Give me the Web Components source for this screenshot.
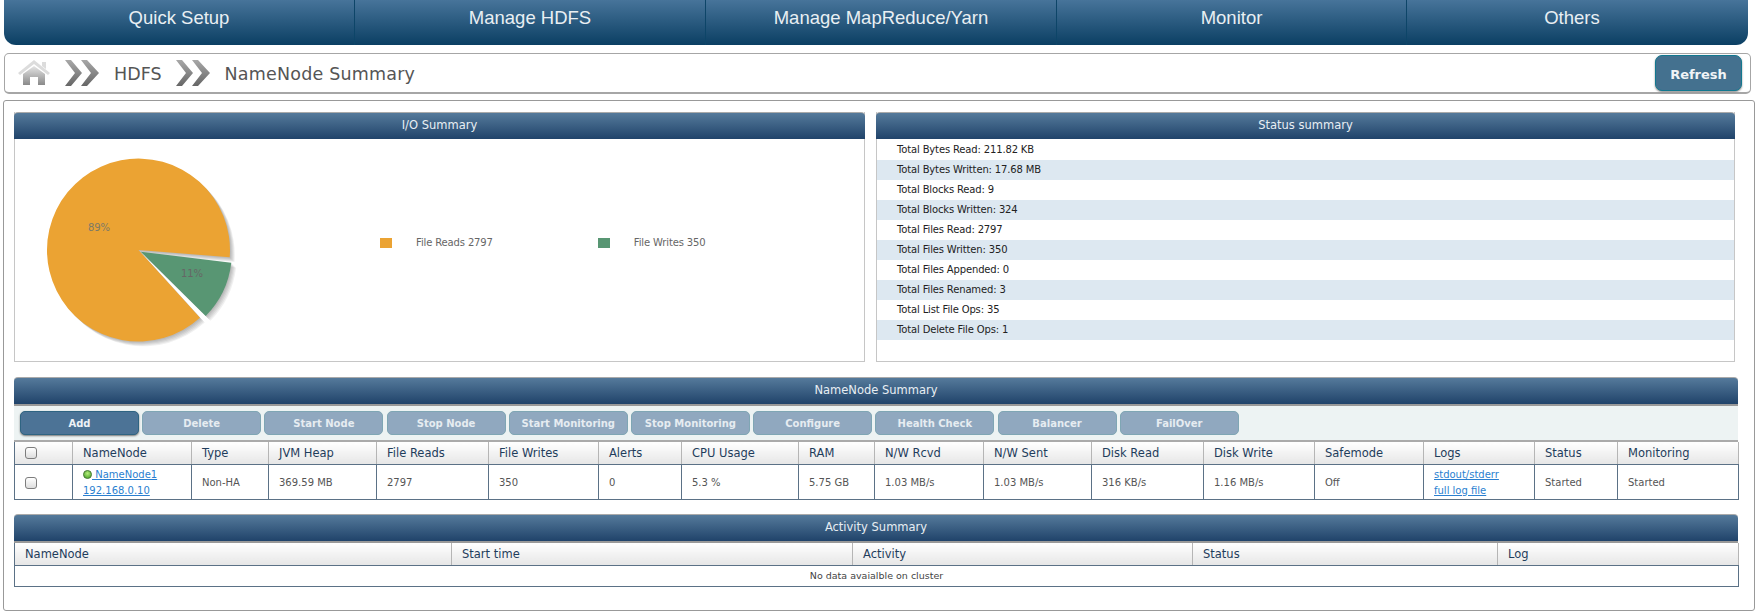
<!DOCTYPE html>
<html>
<head>
<meta charset="utf-8">
<title>NameNode Summary</title>
<style>
    html, body { margin: 0; padding: 0; background: #fff; }
    body { font-family: "DejaVu Sans", sans-serif; width: 1760px; height: 616px; overflow: hidden; }
</style>
</head>
<body>
<top-nav>
    <span>Quick Setup</span>
    <span>Manage HDFS</span>
    <span>Manage MapReduce/Yarn</span>
    <span>Monitor</span>
    <span>Others</span>
</top-nav>
<bread-crumb></bread-crumb>
<main-panel>
    <div style="display:flex;gap:11px">
        <box-panel titulo="I/O Summary" style="width:851px;height:250px"><io-pie></io-pie></box-panel>
        <box-panel titulo="Status summary" style="width:859px;height:250px"><status-list></status-list></box-panel>
    </div>
    <box-panel titulo="NameNode Summary" plain style="margin-top:15px;height:123px">
        <tool-bar></tool-bar>
        <summary-table></summary-table>
    </box-panel>
    <box-panel titulo="Activity Summary" plain style="margin-top:14px">
        <activity-table></activity-table>
    </box-panel>
</main-panel>

<script>
class topNav extends HTMLElement{
    constructor(){
        super();
        this.attachShadow({mode: 'open'});
        this.shadowRoot.innerHTML = `
            <style>
                :host {
                    display: grid;
                    grid-template-columns: 351px 351px 351px 350px 1fr;
                    margin-left: 4px;
                    width: 1744px;
                    height: 45px;
                    border-radius: 0 0 12px 12px;
                    overflow: hidden;
                    background: linear-gradient(#47749a, #0b3f63);
                    font-family: "Liberation Sans", Arial, sans-serif;
                    font-size: 18.5px;
                    color: #e9eff3;
                }
                ::slotted(span) {
                    display: flex;
                    align-items: center;
                    justify-content: center;
                    padding: 0 0 9px 0;
                    box-sizing: border-box;
                    border-right: 1px solid #0d4568;
                }
                ::slotted(span:last-child) { border-right: none; padding-right: 11px; }
            </style>
            <slot></slot>`;
    }
}
customElements.define('top-nav',topNav);

class breadCrumb extends HTMLElement{
    constructor(){
        super();
        this.attachShadow({mode: 'open'});
        const chevrons = `
            <svg width="36" height="30" viewBox="0 0 36 30">
                <defs><linearGradient id="gc" x1="0" y1="0" x2="0" y2="1">
                    <stop offset="0" stop-color="#a8a8a8"/><stop offset="1" stop-color="#666"/>
                </linearGradient></defs>
                <path d="M1 2h6l11 13L7 28H1l10-13zM17 2h6l12 13-12 13h-6l10-13z" fill="url(#gc)"/>
            </svg>`;
        this.shadowRoot.innerHTML = `
            <style>
                :host {
                    display: flex;
                    align-items: center;
                    box-sizing: border-box;
                    margin: 8px 0 0 4px;
                    width: 1747px;
                    height: 41px;
                    border: 1px solid #a6a6a6;
                    border-bottom-width: 2px;
                    border-radius: 5px;
                    padding: 0 8px 0 13px;
                    color: #555;
                    font-size: 17.5px;
                }
                svg { display: block; flex: none; }
                .home { margin-right: 14px; }
                .hdfs { margin: 2px 13px 0 14px; }
                .page { margin: 2px 0 0 14px; letter-spacing: .2px; flex: 1; }
                button {
                    width: 87px;
                    height: 36px;
                    border: 1px solid #12788f;
                    border-radius: 7px;
                    background: #44718f;
                    box-shadow: 0 1px 2px #888;
                    color: #f0f4f7;
                    font: bold 13px "DejaVu Sans", sans-serif;
                    padding: 2px 0 0;
                }
            </style>
            <svg class="home" width="32" height="26" viewBox="0 0 32 26">
                <defs><linearGradient id="gh" x1="0" y1="0" x2="0" y2="1">
                    <stop offset="0" stop-color="#e4e4e4"/><stop offset="1" stop-color="#8a8a8a"/>
                </linearGradient></defs>
                <path d="M16 0 32 13l-2 2L16 4 2 15l-2-2zM24 2h4v7l-4-3z" fill="#dcdcdc"/>
                <path d="M5 14 16 6l11 8v11h-7v-8h-8v8H5z" fill="url(#gh)"/>
            </svg>
            ${chevrons}
            <span class="hdfs">HDFS</span>
            ${chevrons}
            <span class="page">NameNode Summary</span>
            <button>Refresh</button>`;
    }
}
customElements.define('bread-crumb',breadCrumb);

class mainPanel extends HTMLElement{
    constructor(){
        super();
        this.attachShadow({mode: 'open'});
        this.shadowRoot.innerHTML = `
            <style>
                :host {
                    display: block;
                    box-sizing: border-box;
                    margin: 6px 0 0 3px;
                    width: 1752px;
                    height: 511px;
                    border: 1px solid #999;
                    border-radius: 3px;
                    padding: 11px 16px 0 10px;
                }
            </style>
            <slot></slot>`;
    }
}
customElements.define('main-panel',mainPanel);

class boxPanel extends HTMLElement{
    constructor(){
        super();
        this.attachShadow({mode: 'open'});
        this.shadowRoot.innerHTML = `
            <style>
                :host {
                    display: flex;
                    flex-direction: column;
                    box-sizing: border-box;
                    border: 1px solid #c6c6c6;
                    border-top: none;
                }
                :host([plain]) { border: none; }
                .titulo {
                    flex: none;
                    height: 27px;
                    line-height: 24px;
                    margin: 0 -1px;
                    box-sizing: border-box;
                    border-top: 1px solid #aaa;
                    border-radius: 4px 4px 0 0;
                    background: linear-gradient(#557a9b, #20436a);
                    color: #e8eef3;
                    font-size: 11.5px;
                    text-align: center;
                }
                :host([plain]) .titulo { margin: 0; }
            </style>
            <div class="titulo">${this.getAttribute('titulo')}</div>
            <slot></slot>`;
    }
}
customElements.define('box-panel',boxPanel);

class ioPie extends HTMLElement{
    constructor(){
        super();
        this.attachShadow({mode: 'open'});
        const orange = 'M124.5 111 215.7 118.3A91.5 91.5 0 1 0 186 178.8Z';
        const green = 'M126.7 112.7 217.3 123.7A91 91 0 0 1 191.7 177Z';
        const sombra = (d)=>[1.2,2.4,3.6,4.8,6].map(n=>`<path d="${d}" transform="translate(${n*.8} ${n*.8})" fill="#000" opacity=".06"/>`).join('');
        this.shadowRoot.innerHTML = `
            <style>
                :host { display: flex; align-items: flex-start; color: #666; font-size: 10px; }
                svg { display: block; flex: none; margin-left: -1px; }
                text { font-family: "DejaVu Sans", sans-serif; font-size: 10px; }
                .leyenda { display: flex; align-items: center; margin: 98px 0 0 66px; letter-spacing: -.14px; }
                i { display: block; width: 12px; height: 10px; margin-right: 24px; }
                .g { margin-left: 105px; }
            </style>
            <svg width="300" height="222" viewBox="0 0 300 222">
                ${sombra(orange)}
                <path d="${orange}" fill="#eba333"/>
                ${sombra(green)}
                <path d="${green}" fill="#589673"/>
                <text x="85" y="92" text-anchor="middle" fill="#7d7a66">89%</text>
                <text x="178" y="137.500" text-anchor="middle" fill="#666">11%</text>
            </svg>
            <div class="leyenda">
                <i style="background:#eba333"></i><span>File Reads 2797</span>
                <i class="g" style="background:#589673"></i><span>File Writes 350</span>
            </div>`;
    }
}
customElements.define('io-pie',ioPie);

class statusList extends HTMLElement{
    constructor(){
        super();
        this.attachShadow({mode: 'open'});
        const filas = ['Total Bytes Read: 211.82 KB','Total Bytes Written: 17.68 MB','Total Blocks Read: 9','Total Blocks Written: 324',
            'Total Files Read: 2797','Total Files Written: 350','Total Files Appended: 0','Total Files Renamed: 3','Total List File Ops: 35','Total Delete File Ops: 1'];
        this.shadowRoot.innerHTML = `
            <style>
                :host { display: block; padding-top: 1px; font-size: 10px; letter-spacing: -.15px; color: #222; }
                div { height: 20px; line-height: 20px; padding-left: 20px; }
                div:nth-of-type(even) { background: #dde8f1; }
            </style>
            ${filas.map(f=>`<div>${f}</div>`).join('')}`;
    }
}
customElements.define('status-list',statusList);

class toolBar extends HTMLElement{
    constructor(){
        super();
        this.attachShadow({mode: 'open'});
        const botones = ['Add','Delete','Start Node','Stop Node','Start Monitoring','Stop Monitoring','Configure','Health Check','Balancer','FailOver'];
        this.shadowRoot.innerHTML = `
            <style>
                :host {
                    display: flex;
                    gap: 3.2px;
                    box-sizing: border-box;
                    height: 38px;
                    padding: 5px 0 0 6px;
                    background: #edf3f3;
                    border-top: 2px solid #999;
                    border-bottom: 2px solid #aaa;
                }
                button {
                    width: 119px;
                    height: 24px;
                    padding: 0;
                    border: 1px solid #7fa6b4;
                    border-radius: 5px;
                    background: #90a8bf;
                    color: #e6ecf1;
                    font: bold 10px "DejaVu Sans", sans-serif;
                }
                button.on {
                    background: #4c7396;
                    border-color: #2f6482;
                    box-shadow: 0 1px 2px #777;
                    color: #eef2f6;
                }
            </style>
            ${botones.map((b,i)=>`<button class="${i==0?'on':''}">${b}</button>`).join('')}`;
    }
}
customElements.define('tool-bar',toolBar);

const estiloTabla = `
    :host { display: block; }
    table {
        border-collapse: collapse;
        table-layout: fixed;
        width: 100%;
        border: 1px solid #5b7186;
        border-top: none;
    }
    th {
        height: 22px;
        padding: 0 0 0 10px;
        text-align: left;
        font-weight: normal;
        font-size: 11.5px;
        color: #1f3d5c;
        background: linear-gradient(#fff, #e6e6e6);
        border-right: 1px solid #b5b5b5;
        border-bottom: 1px solid #5b7186;
        box-sizing: border-box;
    }
    td {
        padding: 0 0 0 10px;
        font-size: 10px;
        color: #555;
        border-right: 1px solid #5b7186;
        box-sizing: border-box;
    }
    a { color: #2a7fd0; text-decoration: underline; }
`;

class summaryTable extends HTMLElement{
    constructor(){
        super();
        this.attachShadow({mode: 'open'});
        const anchos = [58,119,77,108,112,110,83,117,76,109,108,112,111,109,111,83,121];
        const cabecera = ['NameNode','Type','JVM Heap','File Reads','File Writes','Alerts','CPU Usage','RAM','N/W Rcvd','N/W Sent','Disk Read','Disk Write','Safemode','Logs','Status','Monitoring'];
        const valores = ['Non-HA','369.59 MB','2797','350','0','5.3 %','5.75 GB','1.03 MB/s','1.03 MB/s','316 KB/s','1.16 MB/s','Off'];
        this.shadowRoot.innerHTML = `
            <style>
                ${estiloTabla}
                th { padding-top: 0; }
                tr.fila td { height: 35px; line-height: 16px; padding-top: 2px; }
                .check { padding: 0 0 0 10px; }
                .check i {
                    display: block;
                    box-sizing: border-box;
                    width: 12px;
                    height: 12px;
                    border: 1px solid #7d7d7d;
                    border-radius: 3px;
                    background: linear-gradient(#fff, #ddd);
                }
                .dot {
                    display: inline-block;
                    width: 9px;
                    height: 9px;
                    vertical-align: -1px;
                    border-radius: 50%;
                    background: radial-gradient(circle at 50% 35%, #b5ec7c, #3e9d1d);
                    border: 0.5px solid #4a7a3a;
                    box-sizing: border-box;
                }
            </style>
            <table>
                <colgroup>${anchos.map(a=>`<col style="width:${a}px">`).join('')}</colgroup>
                <tr>
                    <th class="check"><i></i></th>
                    ${cabecera.map(c=>`<th>${c}</th>`).join('')}
                </tr>
                <tr class="fila">
                    <td class="check"><i></i></td>
                    <td><span class="dot"></span><a href="#"> NameNode1<br>192.168.0.10</a></td>
                    ${valores.map(v=>`<td>${v}</td>`).join('')}
                    <td><a href="#">stdout/stderr</a><br><a href="#">full log file</a></td>
                    <td>Started</td>
                    <td>Started</td>
                </tr>
            </table>`;
    }
}
customElements.define('summary-table',summaryTable);

class activityTable extends HTMLElement{
    constructor(){
        super();
        this.attachShadow({mode: 'open'});
        const anchos = [437,401,340,305,241];
        const cabecera = ['NameNode','Start time','Activity','Status','Log'];
        this.shadowRoot.innerHTML = `
            <style>
                ${estiloTabla}
                :host { border-top: 2px solid #999; }
                td { height: 21px; text-align: center; padding: 0; font-size: 9.5px; color: #444; border-right: none; }
            </style>
            <table>
                <colgroup>${anchos.map(a=>`<col style="width:${a}px">`).join('')}</colgroup>
                <tr>${cabecera.map(c=>`<th>${c}</th>`).join('')}</tr>
                <tr><td colspan="5">No data avaialble on cluster</td></tr>
            </table>`;
    }
}
customElements.define('activity-table',activityTable);
</script>
</body>
</html>
